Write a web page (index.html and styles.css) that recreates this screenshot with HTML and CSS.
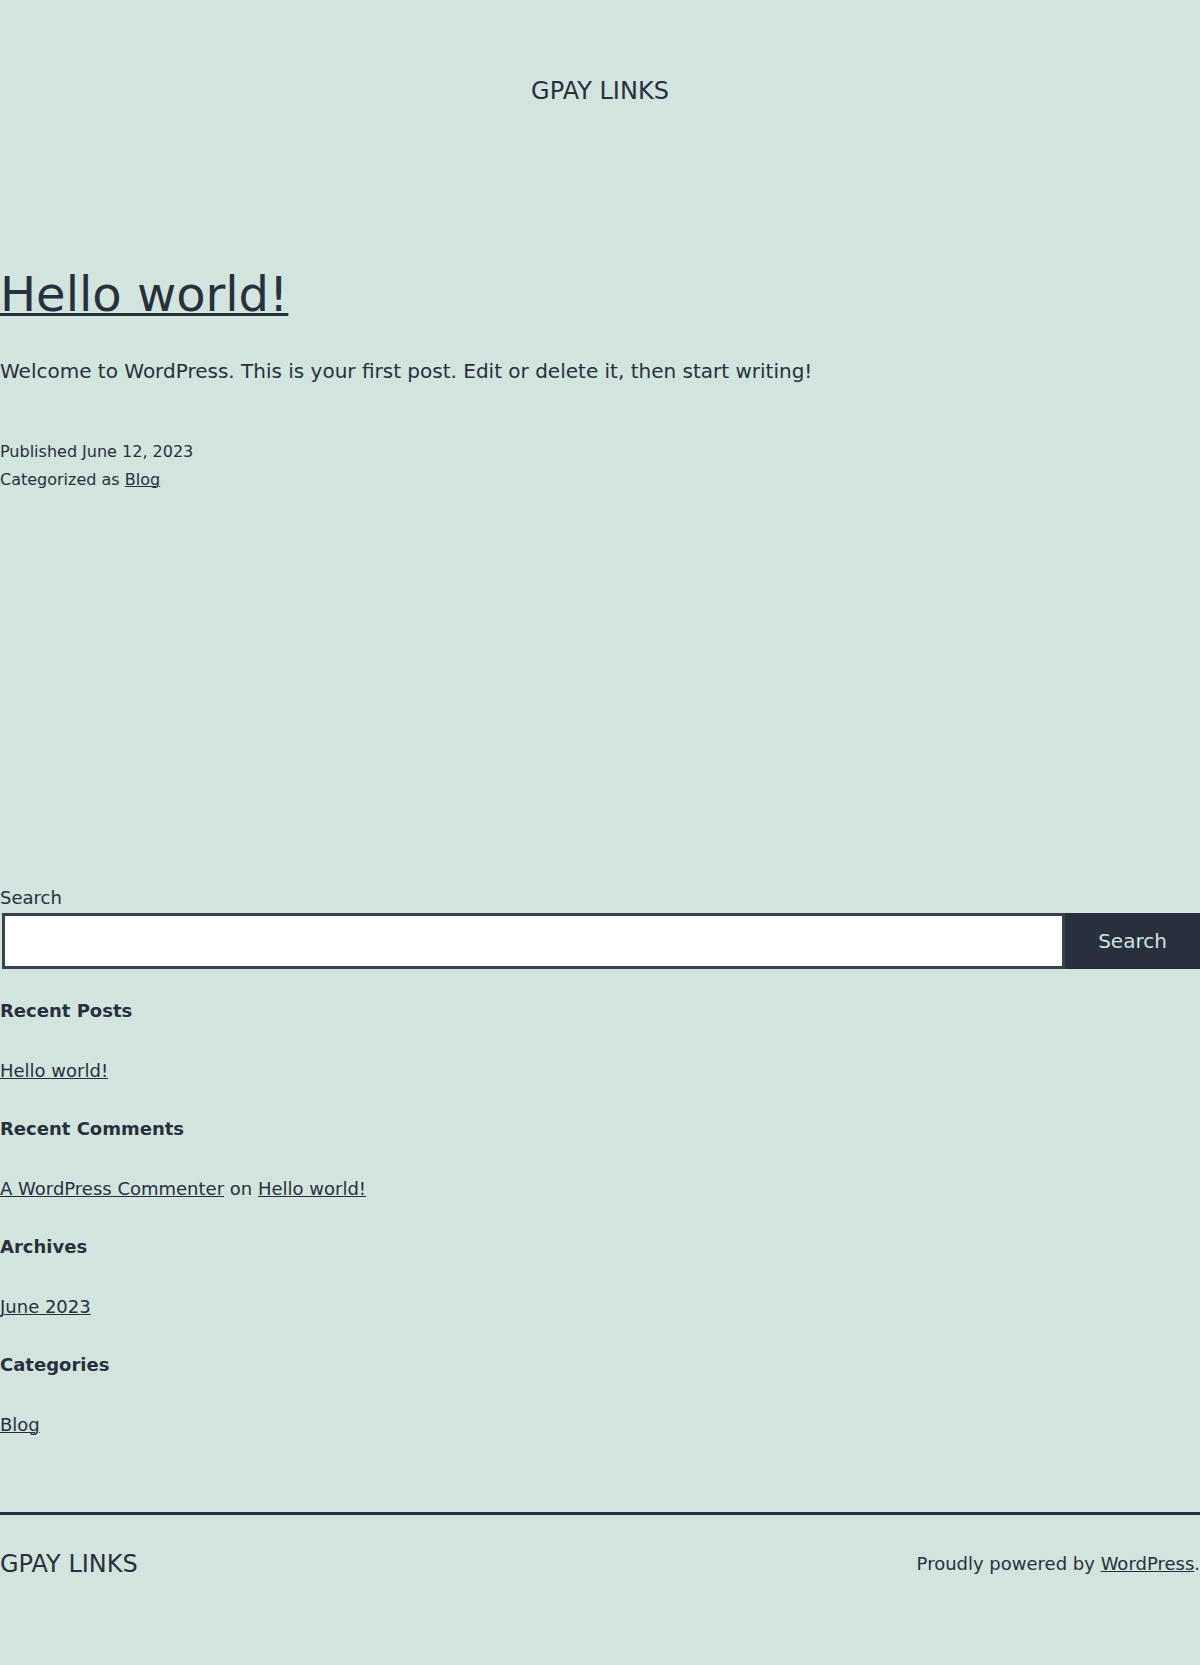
FILE: index.html
```html
<!DOCTYPE html>
<html lang="en">
<head>
<meta charset="utf-8">
<title>GPAY LINKS</title>
<link rel="stylesheet" href="styles.css">
</head>
<body>
<header class="site-header">
  <p class="site-title">GPAY LINKS</p>
</header>
<main class="site-main">
  <article class="post">
    <h1 class="entry-title"><a href="#">Hello world!</a></h1>
    <p class="entry-content">Welcome to WordPress. This is your first post. Edit or delete it, then start writing!</p>
    <div class="entry-meta">
      <div class="meta-line">Published June 12, 2023</div>
      <div class="meta-line">Categorized as <a href="#">Blog</a></div>
    </div>
  </article>
</main>
<aside class="widgets">
  <form class="search-form">
    <label class="search-label" for="s">Search</label>
    <div class="search-row">
      <input class="search-input" id="s" type="search">
      <button class="search-button" type="button">Search</button>
    </div>
  </form>
  <section class="widget">
    <h2 class="widget-title">Recent Posts</h2>
    <ul class="widget-list"><li><a href="#">Hello world!</a></li></ul>
  </section>
  <section class="widget">
    <h2 class="widget-title">Recent Comments</h2>
    <ul class="widget-list"><li><a href="#">A WordPress Commenter</a> on <a href="#">Hello world!</a></li></ul>
  </section>
  <section class="widget">
    <h2 class="widget-title">Archives</h2>
    <ul class="widget-list"><li><a href="#">June 2023</a></li></ul>
  </section>
  <section class="widget">
    <h2 class="widget-title">Categories</h2>
    <ul class="widget-list"><li><a href="#">Blog</a></li></ul>
  </section>
</aside>
<footer class="site-footer">
  <p class="footer-title">GPAY LINKS</p>
  <p class="powered">Proudly powered by <a href="#">WordPress</a>.</p>
</footer>
</body>
</html>
```
FILE: styles.css
```css
html, body {
  margin: 0;
  padding: 0;
}
body {
  background: #d1e4dd;
  color: #28303d;
  font-family: "DejaVu Sans", sans-serif;
  font-size: 18px;
  line-height: 30px;
  min-height: 1665px;
}
a {
  color: #28303d;
  text-decoration: underline;
  text-decoration-thickness: 1px;
}
p, h1, h2, ul {
  margin: 0;
  padding: 0;
}

.site-header {
  padding-top: 76px;
  text-align: center;
}
.site-title {
  font-size: 24px;
  line-height: 30px;
}

.site-main {
  padding-top: 157px;
}
.entry-title {
  font-size: 48px;
  font-weight: normal;
  line-height: 62.4px;
}
.entry-title a {
  text-decoration-thickness: 3px;
}
.entry-content {
  font-size: 20px;
  line-height: 34px;
  margin-top: 29px;
}
.entry-meta {
  margin-top: 50px;
  font-size: 16px;
  line-height: 27.2px;
}

.widgets {
  padding-top: 390px;
}
.search-label {
  display: block;
  font-size: 18px;
  line-height: 30px;
}
.search-row {
  display: flex;
}
.search-input {
  flex: 1;
  margin: 0 0 0 2px;
  height: 56px;
  box-sizing: border-box;
  border: 3px solid #39414d;
  border-radius: 0;
  background: #fff;
  padding: 0 10px;
  font: inherit;
}
.search-button {
  width: 135px;
  height: 56px;
  margin: 0;
  border: 0;
  border-radius: 0;
  background: #28303d;
  color: #d1e4dd;
  font-family: "DejaVu Sans", sans-serif;
  font-size: 20px;
  padding: 0;
}
.widget {
  margin-top: 28px;
}
.search-form + .widget {
  margin-top: 27px;
}
.widget-title {
  font-size: 18px;
  font-weight: bold;
  line-height: 30px;
  margin-bottom: 30px;
}
.widget-list {
  list-style: none;
}

.site-footer {
  margin-top: 72.5px;
  border-top: 3px solid #28303d;
  padding-top: 34px;
  display: flex;
  justify-content: space-between;
  align-items: center;
}
.footer-title {
  font-size: 24px;
  line-height: 30px;
}
.powered {
  font-size: 18px;
  line-height: 30px;
}
```
